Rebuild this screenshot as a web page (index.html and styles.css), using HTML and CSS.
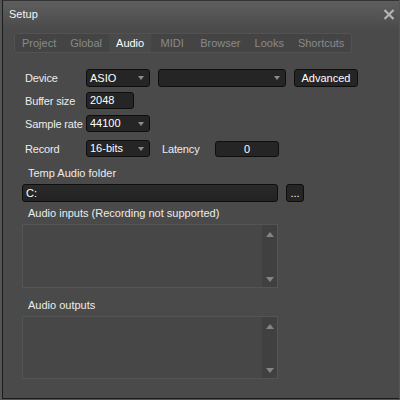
FILE: index.html
```html
<!DOCTYPE html>
<html lang="en">
<head>
    <meta charset="UTF-8">
    <title>Setup</title>
    <link rel="stylesheet" href="styles.css">
</head>
<body>
    <div class="window">
        <div class="titlebar">
            <span class="title">Setup</span>
            <svg class="close" width="12" height="11" viewBox="0 0 12 11">
                <path d="M1.5 1 L10.5 10 M10.5 1 L1.5 10" stroke="#b4b4b4" stroke-width="2.2" fill="none"/>
            </svg>
        </div>
        <div class="tabs">
            <span class="tab">Project</span>
            <span class="tab">Global</span>
            <span class="tab tab-active">Audio</span>
            <span class="tab">MIDI</span>
            <span class="tab">Browser</span>
            <span class="tab">Looks</span>
            <span class="tab">Shortcuts</span>
        </div>
        <div class="panel">
            <div class="row">
                <span class="lbl">Device</span>
                <div class="combo combo-sm">ASIO<i class="arrow"></i></div>
                <div class="combo combo-wide"><i class="arrow"></i></div>
                <button class="btn btn-adv">Advanced</button>
            </div>
            <div class="row">
                <span class="lbl">Buffer size</span>
                <div class="field field-buf">2048</div>
            </div>
            <div class="row">
                <span class="lbl">Sample rate</span>
                <div class="combo combo-sm combo-short">44100<i class="arrow"></i></div>
            </div>
            <div class="row row-record">
                <span class="lbl">Record</span>
                <div class="combo combo-sm combo-short">16-bits<i class="arrow"></i></div>
                <span class="lbl lbl-latency">Latency</span>
                <div class="field field-latency">0</div>
            </div>

            <div class="section-lbl section-first">Temp Audio folder</div>
            <div class="folder-row">
                <div class="field field-folder">C:</div>
                <button class="btn btn-browse">...</button>
            </div>

            <div class="section-lbl">Audio inputs (Recording not supported)</div>
            <div class="listbox">
                <div class="list-items"></div>
                <div class="scrollbar"><i class="sb-up"></i><i class="sb-down"></i></div>
            </div>

            <div class="section-lbl section-out">Audio outputs</div>
            <div class="listbox listbox-out">
                <div class="list-items"></div>
                <div class="scrollbar"><i class="sb-up"></i><i class="sb-down"></i></div>
            </div>
        </div>
    </div>
</body>
</html>
```

FILE: styles.css
```css
body {
    margin: 0;
    background-color: #555;
    font-family: "Liberation Sans", Arial, sans-serif;
    font-size: 11px;
    color: #ececec;
}
.window {
    margin-left: 2px;
    width: 397px;
    height: 399px;
    background-color: #4a4a4a;
    border-left: 1px solid #1c1c1c;
    border-bottom: 1px solid #1c1c1c;
    box-sizing: border-box;
    border-top: 1px solid #333;
}
.titlebar {
    height: 28px;
    box-sizing: border-box;
    display: flex;
    align-items: center;
    justify-content: space-between;
    padding: 0 4px 2px 6px;
    background: linear-gradient(#5e5e5e, #4b4b4b);
}
.title {
    color: #f4f4f4;
    font-size: 11px;
}
.close {
    margin-top: 1px;
}
.tabs {
    display: flex;
    margin: 4px 0 0 11px;
    width: max-content;
    height: 20px;
    border: 1px solid #525252;
    border-radius: 3px;
    background-color: #444;
    box-sizing: border-box;
    overflow: hidden;
}
.tab {
    padding: 0 7px;
    min-width: 28px;
    text-align: center;
    line-height: 18px;
    color: #8a8a8a;
}
.tab-active {
    color: #fff;
    background-color: #4a4a4a;
}
.panel {
    padding: 13px 0 0 19px;
}
.row {
    display: flex;
    align-items: center;
    height: 23px;
    padding-left: 3px;
}
.row-record {
    margin-top: 2px;
}
.lbl {
    width: 61px;
    white-space: nowrap;
    letter-spacing: -0.15px;
}
.lbl-latency {
    width: 53px;
    margin-left: 12px;
}
.combo, .field, .btn {
    box-sizing: border-box;
    height: 18px;
    background-color: #252525;
    border: 1px solid #0e0e0e;
    border-radius: 3px;
    color: #fff;
    font-family: inherit;
    font-size: 11px;
}
.combo {
    position: relative;
    padding-left: 3px;
    line-height: 16px;
}
.combo-sm {
    width: 64px;
}
.combo-short {
    height: 17px;
    line-height: 15px;
}
.combo-wide {
    width: 128px;
    margin-left: 8px;
}
.arrow {
    position: absolute;
    right: 5px;
    top: 6px;
    border-left: 3.5px solid transparent;
    border-right: 3.5px solid transparent;
    border-top: 4px solid #8c8c8c;
}
.btn {
    padding: 0;
    cursor: pointer;
}
.btn-adv {
    width: 64px;
    margin-left: 8px;
}
.field {
    padding-left: 3px;
    line-height: 16px;
}
.field-buf {
    width: 48px;
    height: 17px;
    line-height: 15px;
}
.field-latency {
    width: 64px;
    height: 16px;
    line-height: 14px;
    text-align: center;
    padding: 0;
}
.section-lbl {
    margin: 4px 0 0 6px;
    line-height: 14px;
}
.section-first {
    margin-top: 6px;
}
.section-out {
    margin-top: 10px;
}
.folder-row {
    display: flex;
    gap: 8px;
    margin-top: 4px;
}
.field-folder {
    width: 256px;
    background: linear-gradient(#2a2a2a, #222);
}
.btn-browse {
    width: 18px;
    line-height: 12px;
}
.listbox {
    display: flex;
    width: 256px;
    height: 64px;
    margin-top: 4px;
    border: 1px solid #545454;
    background-color: #474747;
    box-sizing: border-box;
}
.listbox-out {
    height: 63px;
}
.list-items {
    flex: 1;
}
.scrollbar {
    width: 15px;
    background-color: #404040;
    display: flex;
    flex-direction: column;
    justify-content: space-between;
    align-items: center;
    padding: 7px 0 5px;
}
.sb-up {
    border-left: 4px solid transparent;
    border-right: 4px solid transparent;
    border-bottom: 5px solid #858585;
}
.sb-down {
    border-left: 4px solid transparent;
    border-right: 4px solid transparent;
    border-top: 5px solid #858585;
}
```
